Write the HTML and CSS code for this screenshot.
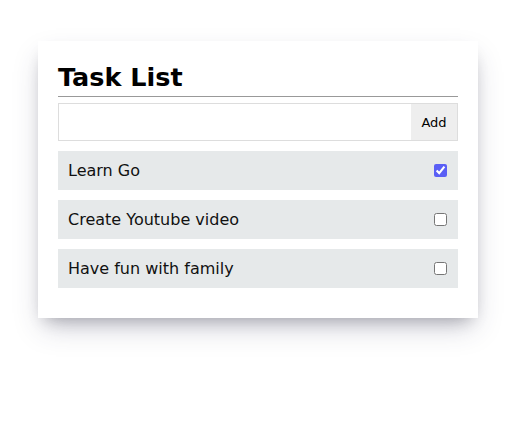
FILE: index.html
```html
<!DOCTYPE html>
<html>
<head>
<meta charset="utf-8">
<link rel="stylesheet" href="styles.css">
</head>
<body>
<div class="card">
  <h1 class="title">Task List</h1>
  <form class="add-form">
    <input class="add-input" type="text">
    <button class="add-btn" type="button">Add</button>
  </form>
  <ul class="tasks">
    <li class="task"><span>Learn Go</span><input type="checkbox" class="check" checked></li>
    <li class="task"><span>Create Youtube video</span><input type="checkbox" class="check"></li>
    <li class="task"><span>Have fun with family</span><input type="checkbox" class="check"></li>
  </ul>
</div>
</body>
</html>
```
FILE: styles.css
```css
html, body { margin: 0; padding: 0; background: #fff; }
body {
  font-family: "DejaVu Sans", Verdana, sans-serif;
  color: #111;
  min-height: 436px;
  padding-top: 41px;
  box-sizing: border-box;
}
.card {
  width: 400px;
  margin: 0 0 0 38px;
  padding: 21px 20px 20px;
  background: #fff;
  box-shadow: 0 13px 27px -5px rgba(50,50,93,0.25), 0 8px 16px -8px rgba(0,0,0,0.3);
}
.title {
  margin: 0;
  font-size: 25.5px;
  font-weight: bold;
  line-height: 30px;
  padding-bottom: 4px;
  border-bottom: 1px solid #999;
  color: #000;
}
.add-form { display: flex; margin-top: 6px; height: 38px; }
.add-input {
  flex: 1;
  margin: 0;
  border: 1px solid #ddd;
  border-right: none;
  padding: 0 8px;
  font: inherit;
  outline: none;
}
.add-btn {
  width: 47px;
  margin: 0;
  border: 1px solid #ddd;
  border-left: none;
  background: #eee;
  font-family: "DejaVu Sans", Verdana, sans-serif;
  font-size: 13px;
  color: #000;
  padding: 0;
}
.tasks { list-style: none; margin: 10px 0 0; padding: 0; }
.task {
  display: flex;
  align-items: center;
  justify-content: space-between;
  background: #e6e9ea;
  padding: 10px 10px;
  margin-bottom: 10px;
  font-size: 16px;
  line-height: 19px;
}
.check {
  margin: 0 1px 0 0;
  width: 13px;
  height: 13px;
  accent-color: #5a5ff5;
}
```
